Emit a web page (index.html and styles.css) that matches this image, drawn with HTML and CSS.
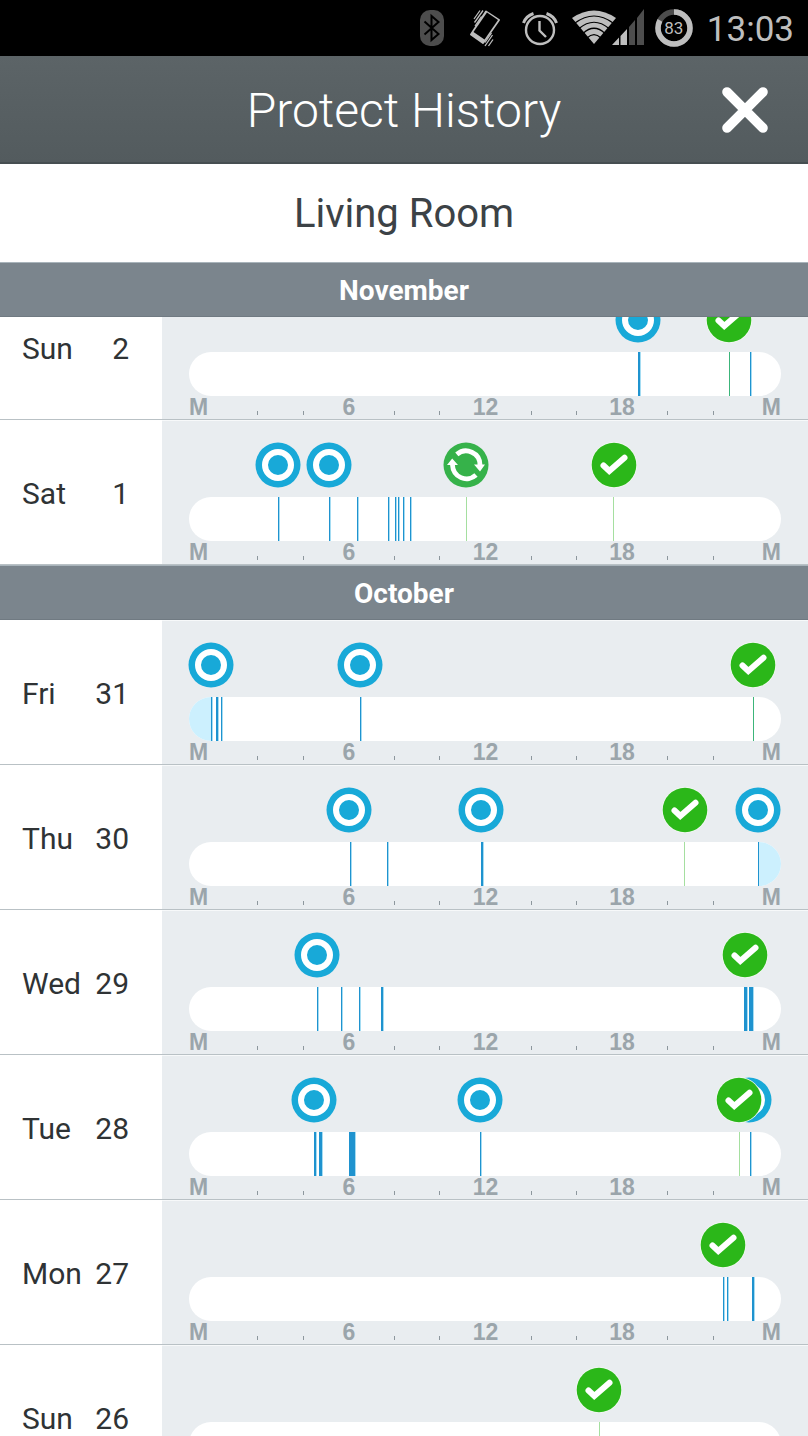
FILE: index.html
```html
<!DOCTYPE html>
<html lang="en">
<head>
  <meta charset="UTF-8" />
  <meta name="viewport" content="width=device-width, initial-scale=1.0" />
  <title>Protect History</title>
  <link rel="stylesheet" href="styles.css">
</head>
<body>
  <svg class="sprite" aria-hidden="true">
    <symbol id="icon-motion" viewBox="0 0 46 46">
      <circle cx="23" cy="23" r="22.5" fill="#18a9d8"/>
      <circle cx="23" cy="23" r="13" fill="none" stroke="#fff" stroke-width="6"/>
    </symbol>
    <symbol id="icon-ok" viewBox="0 0 46 46">
      <circle cx="23" cy="23" r="23" fill="#f4fbf3"/>
      <circle cx="23" cy="23" r="22.3" fill="#2bb719"/>
      <path d="M12.5 23.5 L18.3 29 L33.5 15.7" fill="none" stroke="#fff" stroke-width="6" stroke-linecap="round"/>
    </symbol>
    <symbol id="icon-test" viewBox="0 0 46 46">
      <circle cx="23" cy="23" r="22.5" fill="#36b24a"/>
      <path d="M13.8 12.4 A14 14 0 0 1 37 23 M33 33 A14 14 0 0 1 9.500 23" fill="none" stroke="#fff" stroke-width="4.8"/>
      <path d="M31 22.5 H42 L37 29.5 Z M4 23 H15 L9.2 16.5 Z" fill="#fff"/>
    </symbol>
  </svg>

  <div class="status-bar">
    <svg class="status-icon" width="24" height="36" viewBox="0 0 24 36">
      <rect width="24" height="36" rx="10" fill="#4d4d4d"/>
      <path d="M4.5 11.5 L18.5 24 L11.5 30 V6 L18.5 12 L4.5 24.5" fill="none" stroke="#000" stroke-width="2"/>
    </svg>
    <svg class="status-icon status-vibrate" width="34" height="38" viewBox="0 0 34 38">
      <path d="M18 2.5 L31 11 L15 34 L3 25.5 Z" fill="#bebebe" stroke="#bebebe" stroke-width="2" stroke-linejoin="round"/>
      <path d="M19 3.5 L30 11 L16.500 30.500 L5.500 23 Z" fill="#000"/>
      <path d="M6 10 L12 1.5 M6.500 13.5 L15 1.500 M7 17 L13.5 7.5 M17 37 L24.5 26 M20.5 37 L25 30.5 M23.5 24 L17 33.5" stroke="#bebebe" stroke-width="1.3"/>
    </svg>
    <svg class="status-icon status-alarm" width="36" height="36" viewBox="0 0 36 36" fill="none" stroke="#bebebe">
      <circle cx="18" cy="20" r="14" stroke-width="2.4"/>
      <path d="M17.5 11 V20.5 L24 27" stroke-width="2.4"/>
      <path d="M1.5 13 Q4 6 11.5 3.5 M24.5 3.5 Q32 6 34.5 13" stroke-width="3"/>
    </svg>
    <svg class="status-icon status-signal" width="72" height="38" viewBox="0 0 72 38">
      <path d="M0 9 Q22 -6 44 9 L22 35 Z" fill="#bebebe"/>
      <path d="M3 14 Q22 0 41 14 M7 19.5 Q22 7 37 19.5 M11 24.5 Q22 14 33 24.5 M15 29 Q22 22 29 29" fill="none" stroke="#000" stroke-width="1.2"/>
      <path d="M40 36 L47 28.5 V36 Z M48.5 27 L55 20 V36 H48.5 Z" fill="#bebebe"/>
      <path d="M57 18 L63 11 V36 H57 Z M65 9 L72 0 V36 H65 Z" fill="#4d4d4d"/>
    </svg>
    <div class="battery">
      <svg width="38" height="38" viewBox="0 0 38 38" fill="none" stroke-width="5.5">
        <circle cx="19" cy="19" r="16" stroke="#4d4d4d"/>
        <circle cx="19" cy="19" r="16" stroke="#bebebe" pathLength="100" stroke-dasharray="83 17" transform="rotate(-90 19 19)"/>
      </svg>
      <span class="battery-level">83</span>
    </div>
    <span class="clock">13:03</span>
  </div>

  <header class="app-bar">
    <h1>Protect History</h1>
    <button class="btn-close" type="button" aria-label="Close">
      <svg width="46" height="46" viewBox="0 0 46 46">
        <path d="M5 5 L41 41 M41 5 L5 41" stroke="#fff" stroke-width="9.6" stroke-linecap="round"/>
      </svg>
    </button>
  </header>

  <h2 class="room">Living Room</h2>

  <main class="history" id="history"></main>

<script src="history.js"></script>
</body>
</html>
```

FILE: styles.css
```css
body {
  font-family: Roboto, "Liberation Sans", sans-serif;
  background: #fff;
  color: #2f3335;
  margin: 0;
  height: 100vh;
  overflow: hidden;
  display: flex;
  flex-direction: column;
}
h1, h2, h3, ul {
  margin: 0;
  padding: 0;
  font-weight: normal;
}
svg {
  display: block;
}
.sprite {
  position: absolute;
  width: 0;
  height: 0;
}

/* status bar */
.status-bar {
  flex: none;
  height: 56px;
  padding-right: 14px;
  background: #000;
  color: #bebebe;
  display: flex;
  align-items: center;
  justify-content: flex-end;
}
.status-vibrate {
  margin-left: 24px;
}
.status-alarm {
  margin-left: 20px;
}
.status-signal {
  margin-left: 14px;
}
.battery {
  display: grid;
  place-items: center;
  margin: 0 14px 0 11px;
}
.battery > * {
  grid-area: 1 / 1;
}
.battery-level {
  font-size: 17px;
}
.clock {
  padding-top: 3px;
  font-size: 35px;
}

/* header */
.app-bar {
  flex: none;
  box-sizing: border-box;
  height: 108px;
  padding: 2px 40px 0;
  background: linear-gradient(#5c6467, #535b5e);
  border-bottom: 2px solid #464e51;
  color: #fff;
  display: grid;
  grid-template-columns: 46px 1fr 46px;
  align-items: center;
}
.app-bar h1 {
  grid-column: 2;
  font-size: 48px;
  font-weight: 300;
  text-align: center;
}
.btn-close {
  padding: 0;
  border: none;
  background: none;
}
.room {
  flex: none;
  padding-top: 2px;
  color: #3c4246;
  font-size: 40px;
  line-height: 96px;
  text-align: center;
}

/* history list */
.history {
  flex: 1;
  min-height: 0;
  overflow: hidden;
}
.month h3 {
  position: relative;
  z-index: 1;
  box-sizing: border-box;
  height: 55px;
  padding-top: 1px;
  line-height: 53px;
  background: #7b858d;
  border-top: 1px solid #a9b4bb;
  border-bottom: 1px solid #707a82;
  color: #fff;
  font-size: 28px;
  font-weight: bold;
  text-align: center;
}
.month ul {
  list-style: none;
}
/* the newest day is scrolled partly under its month */
.month:first-child ul {
  margin-top: -42px;
}
.day {
  box-sizing: border-box;
  height: 145px;
  border-bottom: 1px solid #b9c1c5;
  display: grid;
  grid-template-columns: 162px 1fr;
}
.date {
  display: flex;
  align-items: center;
  justify-content: space-between;
  padding: 2px 33px 0 22px;
  font-size: 30px;
}
.timeline {
  padding: 21px 27px 0;
  background: #e9edf0;
  border-top: 1px solid #f7f9fa;
}
.events {
  position: relative;
  height: 46px;
  margin-bottom: 9px;
}
.event {
  position: absolute;
  top: 0;
  width: 46px;
  height: 46px;
  margin-left: -23px;
}
.track {
  position: relative;
  height: 44px;
  border-radius: 22px;
  background: #fff;
  overflow: hidden;
}
.mark {
  position: absolute;
  top: 0;
  bottom: 0;
  background: #1f93cf;
  box-shadow: 1px 0 #a5dcf2;
}
.mark-ok {
  background: #a5dfa0;
  box-shadow: none;
}
.mark-safe {
  background: #3cb57a;
  box-shadow: none;
}
.mark-night {
  background: #ccf0fe;
  box-shadow: none;
}
.axis {
  display: grid;
  grid-template-columns: 46px repeat(11, 1fr) 45px;
  align-items: baseline;
  justify-items: center;
  color: #9ba5ab;
  font-family: "Liberation Sans", Arial, sans-serif;
  font-size: 23px;
  font-weight: bold;
  line-height: 22px;
}
.axis :first-child {
  justify-self: start;
}
.axis :last-child {
  justify-self: end;
}
.tick {
  width: 1px;
  height: 4px;
  background: #8d979d;
}
```

FILE: history.js
```js
// positions run from 0 to TRACK, midnight to midnight
const TRACK = 592;

// events: [icon, position], marks: [position, width, kind]
const months = [
  { name: "November", days: [
    { day: "Sun", date: 2,
      events: [["motion", 449], ["ok", 540]],
      marks: [[449, 2], [540, 1, "safe"], [561, 1]] },
    { day: "Sat", date: 1,
      events: [["motion", 89], ["motion", 140], ["test", 277], ["ok", 425]],
      marks: [[89, 1], [140, 1], [168, 1], [199, 1], [206, 1], [209, 1], [214, 1], [221, 1], [277, 1, "ok"], [424, 1, "ok"]] }
  ] },
  { name: "October", days: [
    { day: "Fri", date: 31,
      events: [["motion", 22], ["motion", 171], ["ok", 564]],
      marks: [[0, 22, "night"], [22, 1], [27, 2], [32, 1], [171, 1], [564, 1, "safe"]] },
    { day: "Thu", date: 30,
      events: [["motion", 160], ["motion", 292], ["ok", 496], ["motion", 569]],
      marks: [[161, 1], [198, 1], [292, 2], [495, 1, "ok"], [569, 1], [570, 22, "night"]] },
    { day: "Wed", date: 29,
      events: [["motion", 128], ["ok", 556]],
      marks: [[128, 1], [152, 1], [170, 1], [192, 2], [555, 3], [560, 4]] },
    { day: "Tue", date: 28,
      events: [["motion", 125], ["motion", 291], ["motion", 560], ["ok", 550]],
      marks: [[125, 2], [130, 3], [160, 6], [291, 1], [550, 1, "ok"], [561, 1]] },
    { day: "Mon", date: 27,
      events: [["ok", 534]],
      marks: [[534, 1], [538, 1], [563, 2]] },
    { day: "Sun", date: 26,
      events: [["ok", 410]],
      marks: [[410, 1, "ok"]] }
  ] }
];

const percent = n => (n / TRACK * 100) + "%";

const axis = ["M", "", "", "6", "", "", "12", "", "", "18", "", "", "M"]
  .map(label => label ? `<span>${label}</span>` : `<i class="tick"></i>`)
  .join("");

function renderDay(d) {
  const events = d.events.map(([icon, pos]) =>
    `<svg class="event" style="left: ${percent(pos)}"><use href="#icon-${icon}"/></svg>`).join("");
  const marks = d.marks.map(([pos, width, kind]) =>
    `<span class="mark ${kind ? "mark-" + kind : ""}" style="left: ${percent(pos)}; width: ${width}px"></span>`).join("");
  return `
    <li class="day">
      <div class="date"><span>${d.day}</span><span>${d.date}</span></div>
      <div class="timeline">
        <div class="events">${events}</div>
        <div class="track">${marks}</div>
        <div class="axis">${axis}</div>
      </div>
    </li>`;
}

document.getElementById("history").innerHTML = months.map(m => `
  <section class="month">
    <h3>${m.name}</h3>
    <ul>${m.days.map(renderDay).join("")}</ul>
  </section>`).join("");
```
